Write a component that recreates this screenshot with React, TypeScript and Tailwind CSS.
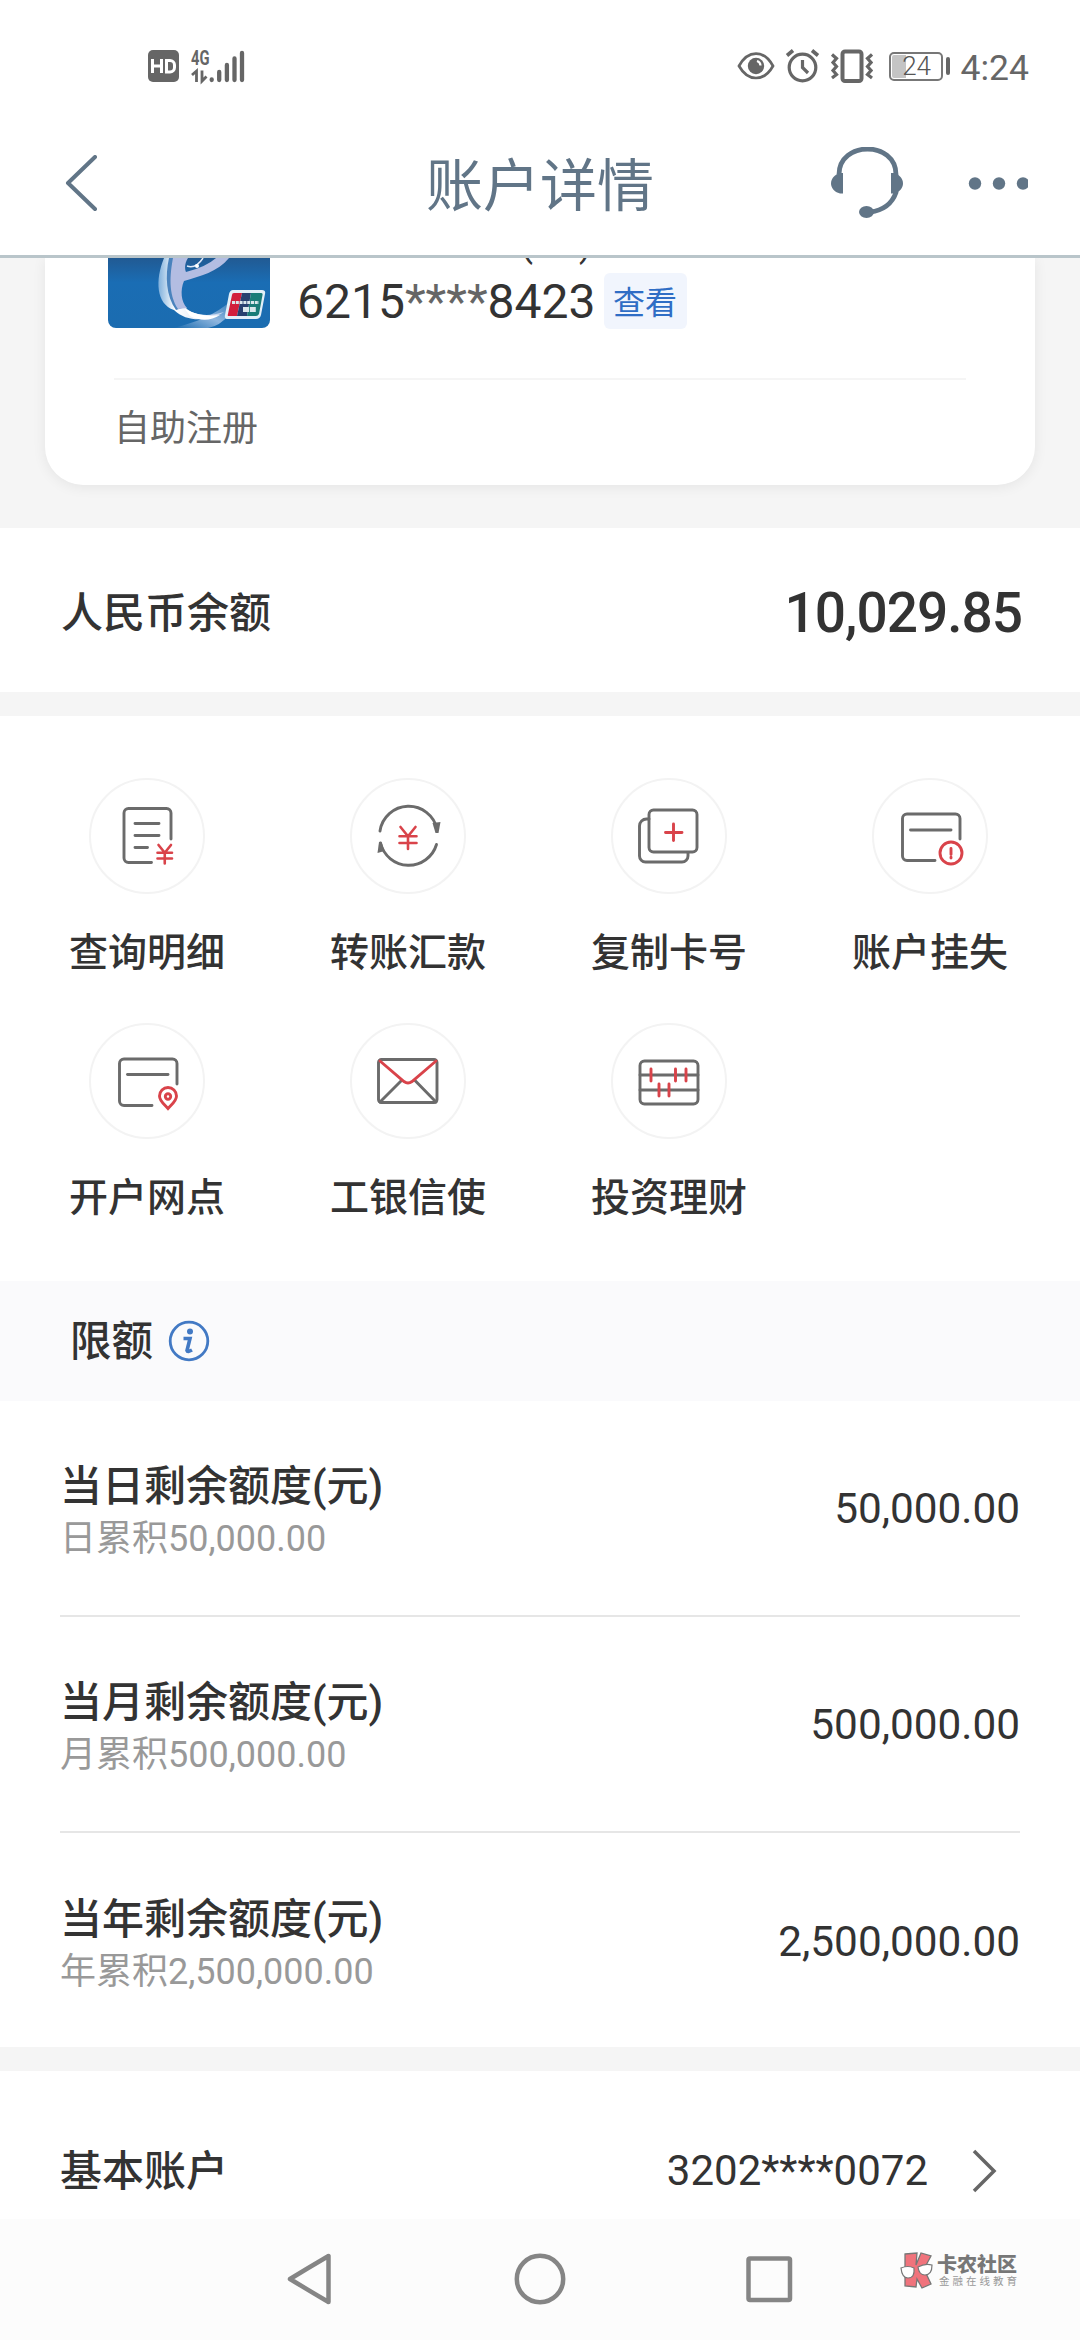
import type { ReactNode } from 'react'

const RED = '#d9434a'
const LINE = '#6b6b6b'
const SLATE = '#617587'

function Yuan({ x, y, w, h }: { x: number; y: number; w: number; h: number }) {
  const cx = x + w / 2
  return (
    <path
      d={`M${x + 1} ${y}L${cx} ${y + h * 0.42}L${x + w - 1} ${y}M${cx} ${y + h * 0.42}V${y + h}M${x} ${y + h * 0.42}H${x + w}M${x} ${y + h * 0.73}H${x + w}`}
      stroke={RED}
      strokeWidth="2.6"
    />
  )
}

// All action icons share a 116x116 box with the ring drawn around them
const ACTIONS: { label: string; icon: ReactNode }[] = [
  {
    label: '查询明细',
    icon: (
      <>
        <path d="M82 61V35a4.500 4.500 0 0 0-4.500-4.500H39.500A4.500 4.500 0 0 0 35 35V80a4.500 4.500 0 0 0 4.500 4.500H62.500" />
        <path d="M46 45.500H70M46 57.500H70M46 69.500H58.500" />
        <Yuan x={68.500} y={67} w={14.500} h={18.500} />
      </>
    ),
  },
  {
    label: '转账汇款',
    icon: (
      <>
        <path d="M30 53A29 29 0 0 1 87 51" />
        <path d="M86.500 66.500A29 29 0 0 1 30.500 65" />
        <path d="M82.500 45L90.500 44L88.500 55H85.500Z" fill={LINE} stroke="none" />
        <path d="M29 64H31.500L34.500 73L27.500 75Z" fill={LINE} stroke="none" />
        <Yuan x={49.500} y={49} w={17} h={22} />
      </>
    ),
  },
  {
    label: '复制卡号',
    icon: (
      <>
        <rect x="38" y="32" width="48" height="42" rx="4.500" />
        <path d="M38 41H35.500A7 7 0 0 0 28.500 48V78a6 6 0 0 0 6 6H71a6 6 0 0 0 6-6V75" />
        <path d="M62.500 46V62.500M54.500 54.500H71" stroke={RED} />
      </>
    ),
  },
  {
    label: '账户挂失',
    icon: (
      <>
        <path d="M88 61V40.500a4.500 4.500 0 0 0-4.500-4.500H35a4.500 4.500 0 0 0-4.500 4.500V78A4.500 4.500 0 0 0 35 82.500H63" />
        <path d="M38.500 52H79" />
        <circle cx="79" cy="75" r="11" stroke={RED} />
        <path d="M79 70.500V76.500M79 79.200V80" stroke={RED} />
      </>
    ),
  },
  {
    label: '开户网点',
    icon: (
      <>
        <path d="M88 61V40.500a4.500 4.500 0 0 0-4.500-4.500H35a4.500 4.500 0 0 0-4.500 4.500V78A4.500 4.500 0 0 0 35 82.500H63" />
        <path d="M38.500 51.500H79" />
        <path d="M79 85.500C75 81 70.500 78 70.500 73a8.500 8.500 0 0 1 17 0C87.500 78 83 81 79 85.500Z" stroke={RED} />
        <circle cx="79" cy="73.500" r="2.700" stroke={RED} />
      </>
    ),
  },
  {
    label: '工银信使',
    icon: (
      <>
        <rect x="28.500" y="36.500" width="58.500" height="43" rx="3" />
        <path d="M30 79L51.500 57.500M86 79L65 57.500" />
        <path d="M30 38L54 58.500Q58 61.500 62 58.500L86 38" stroke={RED} />
      </>
    ),
  },
  {
    label: '投资理财',
    icon: (
      <>
        <rect x="29" y="38" width="58" height="43" rx="4.500" />
        <path d="M29 52H87M29 67H87" />
        <path d="M40 46V58M64.500 46V58M75 46V58M48 61V73M58 61V73" stroke={RED} />
      </>
    ),
  },
]

const LIMITS = [
  { title: '当日剩余额度(元)', note: '日累积50,000.00', value: '50,000.00' },
  { title: '当月剩余额度(元)', note: '月累积500,000.00', value: '500,000.00' },
  { title: '当年剩余额度(元)', note: '年累积2,500,000.00', value: '2,500,000.00' },
]

function StatusBar() {
  return (
    <div className="flex h-[132px] items-center justify-between pr-[51px] pl-[148px]">
      <div className="flex items-center gap-3">
        <svg className="h-[32px] w-[31px]" viewBox="0 0 31 32">
          <rect width="31" height="32" rx="5" fill="#666" />
          <path d="M4.500 9V23M13.500 9V23M4.500 16H13.500" stroke="#fff" strokeWidth="3" fill="none" />
          <path d="M18.500 10.500H22a4.500 4.500 0 0 1 4.500 4.500V17.500A4.500 4.500 0 0 1 22 22H18.500Z" stroke="#fff" strokeWidth="3" fill="none" />
        </svg>
        <svg className="h-[36px] w-[54px] overflow-visible" viewBox="0 0 54 36">
          <text x="0" y="17" fontSize="20" fontWeight="700" fill="#666" fontFamily="Roboto" textLength="18.500" lengthAdjust="spacingAndGlyphs">4G</text>
          <path d="M1 27L5.500 23V34M11 22.500V33L15.500 28.500" stroke="#666" strokeWidth="2.800" fill="none" />
          <path d="M20.700 32V31.500M28.200 32V24M35.900 32V17M43.500 32V10.500M51 32V5" stroke="#666" strokeWidth="4.300" strokeLinecap="round" />
        </svg>
      </div>
      <div className="flex items-center">
        <svg className="h-[34px] w-[136px]" viewBox="737 49.500 136 34">
          <path d="M739 66.500C748 50 764 50 773 66.500C764 82.500 748 82.500 739 66.500Z" fill="none" stroke="#666" strokeWidth="2.700" />
          <circle cx="756" cy="66.500" r="8.200" fill="#666" />
          <path d="M757 61.500A5 5 0 0 1 760.500 66" fill="none" stroke="#fff" strokeWidth="2.200" />
          <circle cx="802.500" cy="68" r="13.300" fill="none" stroke="#666" strokeWidth="3.200" />
          <path d="M802.500 60.500V68L808 73.500" fill="none" stroke="#666" strokeWidth="3.200" />
          <path d="M787 56L793 51M818 56L812 51" stroke="#666" strokeWidth="3.600" />
          <rect x="842.500" y="52" width="19" height="29.500" rx="2.500" fill="none" stroke="#666" strokeWidth="4" />
          <path d="M832 55L836.500 59L833 63L836.500 67L833 71L836.500 75L832 78.500M872 55L867.500 59L871 63L867.500 67L871 71L867.500 75L872 78.500" fill="none" stroke="#666" strokeWidth="3.200" />
        </svg>
        <div className="ml-[16px] flex h-[29px] w-[54px] items-center rounded-[5px] border-2 border-[#777] bg-[linear-gradient(90deg,#c4c4c4_15px,transparent_15px)] bg-clip-content p-px">
          <span className="w-full pl-[2px] text-center text-[26px] leading-[29px] font-light text-[#555]">24</span>
        </div>
        <div className="ml-[3px] h-[18px] w-[4px] rounded-sm bg-[#666]" />
        <span className="mt-[3px] ml-[11px] text-[35.500px] leading-[40px] text-[#666]">4:24</span>
      </div>
    </div>
  )
}

function TitleBar() {
  return (
    <div className="flex h-[126px] items-center justify-between border-b-3 border-[#b9c5ca] pr-[52px] pb-[20px] pl-[64px]">
      <svg className="h-[58px] w-[188px]" viewBox="0 0 188 58" fill="none" stroke={SLATE} strokeWidth="4" strokeLinecap="round" strokeLinejoin="round">
        <path d="M31 2L4 28L31 54" />
      </svg>
      <h1 className="mt-[6px] text-[57px] leading-[60px] text-[#617587]">账户详情</h1>
      <svg className="h-[74px] w-[200px]" viewBox="828 146.500 200 74" fill={SLATE}>
        <path d="M839 174C839 140 896 140 896 174V192Q890 209 870 211.500" fill="none" stroke={SLATE} strokeWidth="4.800" />
        <path d="M843 172.500V193H840C828 190 828 176 840 172.500Z" />
        <path d="M891 172.500V193H894C906 190 906 176 894 172.500Z" />
        <ellipse cx="866.500" cy="211.500" rx="7.500" ry="6" />
        <circle cx="975" cy="183" r="6.200" />
        <circle cx="999" cy="183" r="6.200" />
        <circle cx="1023" cy="183" r="6.200" />
      </svg>
    </div>
  )
}

function CardThumb() {
  return (
    <svg className="h-[70px] w-[162px] shrink-0 rounded-b-[8px]" viewBox="0 0 162 70">
      <defs>
        <linearGradient id="sea" x1="0" y1="0" x2="0" y2="1">
          <stop offset="0" stopColor="#215a93" />
          <stop offset=".35" stopColor="#1a6db4" />
          <stop offset="1" stopColor="#1b6cb0" />
        </linearGradient>
        <linearGradient id="silver" x1="0" y1="0" x2="1" y2="0">
          <stop offset="0" stopColor="#7fb0dc" />
          <stop offset=".25" stopColor="#ffffff" />
          <stop offset="1" stopColor="#c3d3ee" />
        </linearGradient>
        <linearGradient id="glow" x1="0" y1="1" x2="1" y2="0">
          <stop offset="0" stopColor="#1b6cb0" />
          <stop offset=".5" stopColor="#8fb6de" />
          <stop offset="1" stopColor="#2f78b8" />
        </linearGradient>
      </defs>
      <rect width="162" height="70" fill="url(#sea)" />
      <path d="M66 70C88 64 106 58 124 42L122 56Q112 68 100 70Z" fill="url(#glow)" />
      <path d="M56 0C47 22 48 46 66 52C80 66 104 62 116 54C98 60 84 56 78 50L66 44L62 0Z" fill="url(#silver)" />
      <path d="M61 0H66C61 18 64 38 74 50L68 52C58 38 57 18 61 0Z" fill="#4a83bd" />
      <path d="M65 0H80C76 6 77 12 78 14Q98 9 108 0H121C110 14 92 18 76 23C72 32 73 44 79 50L70 51C60 36 62 16 65 0Z" fill="#b3bde2" />
      <path d="M79 8Q88 11 95 0" fill="none" stroke="#dfe8f8" strokeWidth="1.500" />
      <circle cx="89" cy="8" r="2" fill="#fff" />
      <path d="M77 51Q94 60 112 57Q98 66 82 58Z" fill="#fff" />
      <g transform="translate(118 32)">
        <path d="M7 0H36Q40 0 39 4L35 25Q34 29 30 29H2Q-2 29-1 25L3 4Q4 0 7 0Z" fill="#e3eff8" />
        <path d="M8 3H16L11 26H3Q1 26 2 24L6 5Q6 3 8 3Z" fill="#d21f3c" />
        <path d="M16 3H25L21 26H11Z" fill="#27406f" />
        <path d="M25 3H35Q37 3 36.500 5L33 24Q32 26 30 26H21Z" fill="#1a7c78" />
        <path d="M6 12.500H33" stroke="#d9e7ec" strokeWidth="3" strokeDasharray="3 .8" />
        <path d="M17 19.500H30" stroke="#d9e7ec" strokeWidth="5" strokeDasharray="6 .8" />
      </g>
    </svg>
  )
}

function CardPanel() {
  return (
    <section className="h-[270px] overflow-hidden bg-[#f5f5f5] px-[45px]">
      <div className="h-[227px] rounded-b-[38px] bg-white px-[63px] shadow-[0_2px_14px_rgba(0,0,0,0.07)]">
        <div className="flex h-[120px]">
          <CardThumb />
          <div className="ml-[27px]">
            {/* Card name, scrolled under the title bar */}
            <div className="flex h-[14px] items-start overflow-hidden pl-[223px] text-[38px] text-[#333]">
              <span className="-mt-[35px] leading-[40px]">(</span>
              <span className="-mt-[35px] ml-[46px] leading-[40px]">)</span>
            </div>
            <div className="flex items-center">
              <span className="pt-[2px] text-[48px] leading-[56px] text-[#333]">
                6215<span className="text-[#666]">****</span>8423
              </span>
              <span className="ml-[8px] h-[56px] rounded-[6px] bg-[#f1f5fd] px-[9.500px] text-[32px] leading-[60px] text-[#2f6dc5]">查看</span>
            </div>
          </div>
        </div>
        <div className="mx-[6px] border-t-2 border-[#f5f5f5] pt-[28px] text-[36px] leading-[42px] text-[#666]">自助注册</div>
      </div>
    </section>
  )
}

function NavBar() {
  return (
    <nav className="flex h-[121px] items-center bg-[#fcfcfc] pl-[286px]">
      <svg className="mb-[2px] h-[54px] w-[508px]" viewBox="286 2252 508 54" fill="none" stroke="#858585" strokeWidth="4.500" strokeLinejoin="round">
        <path d="M328.500 2256V2302Q308 2290 290 2279Q308 2268 328.500 2256Z" />
        <circle cx="540" cy="2279" r="23.200" />
        <rect x="748.500" y="2258.500" width="41.500" height="41.500" rx="1.500" />
      </svg>
      <svg className="mb-[17px] ml-[105px] h-[38px] w-[36px]" viewBox="0 0 36 38">
        <path d="M6 2L18 1L17 13L22 1L32 4L25 17L32 32L23 36L18 27L17 35L6 34Z" fill="#f0737c" stroke="#777" strokeWidth="1.300" />
        <path d="M2 16Q9 13 15 16Q16 26 9 26Q3 26 2 16Z" fill="#fff" stroke="#777" strokeWidth="1.200" />
        <path d="M19 15Q26 11 33 13Q33 23 26 23Q20 23 19 15Z" fill="#fff" stroke="#777" strokeWidth="1.200" />
      </svg>
      <div className="mb-[18px] ml-[2px] flex flex-col whitespace-nowrap">
        <span className="text-[20px] leading-[22px] font-black text-[#777]">卡农社区</span>
        <span className="ml-[2px] text-[10.500px] leading-[12px] tracking-[3px] text-[#999]">金融在线教育</span>
      </div>
    </nav>
  )
}

export default function App() {
  return (
    <div className="h-[2340px] w-[1080px] overflow-hidden bg-white font-[Roboto,'Noto_Sans_CJK_SC',sans-serif] text-[#333]">
      <StatusBar />
      <TitleBar />
      <CardPanel />

      {/* Balance */}
      <section className="flex h-[164px] items-center justify-between pt-[7px] pr-[58px] pl-[61px]">
        <span className="text-[42px] font-medium">人民币余额</span>
        <span className="text-[55px] font-medium tracking-[-1px]">10,029.85</span>
      </section>
      <div className="h-[24px] bg-[#f5f5f5]" />

      {/* Actions */}
      <section className="grid h-[565px] grid-cols-4 content-start pt-[62px] pr-[19.500px] pl-[16.500px]">
        {ACTIONS.map(a => (
          <div key={a.label} className="flex h-[245px] flex-col items-center">
            <svg className="h-[116px] w-[116px]" viewBox="0 0 116 116" fill="none" stroke={LINE} strokeWidth="2.900" strokeLinecap="round">
              <circle cx="58" cy="58" r="57" stroke="#f3f3f3" strokeWidth="2" />
              {a.icon}
            </svg>
            <span className="mt-[36px] text-[39px] leading-[46px] font-medium">{a.label}</span>
          </div>
        ))}
      </section>

      {/* Limits */}
      <div className="flex h-[120px] items-center gap-[15px] bg-[#fafafc] pl-[70px]">
        <span className="pt-[3px] text-[41.500px] font-medium">限额</span>
        <svg className="h-[42px] w-[42px]" viewBox="0 0 42 42" fill="none" stroke="#4279c4">
          <circle cx="21" cy="21" r="18.800" strokeWidth="2.800" />
          <circle cx="22" cy="11.500" r="3" fill="#4279c4" stroke="none" />
          <path d="M15.500 18.500H22L19 30.500Q19.500 32.500 24 30" strokeWidth="3.600" />
        </svg>
      </div>
      <section className="h-[646px] divide-y-2 divide-[#e6e6e6] px-[60px]">
        {LIMITS.map(l => (
          <div key={l.title} className="flex h-[216px] items-center justify-between">
            <div className="flex flex-col pt-[7px]">
              <span className="text-[42px] leading-[54px] font-medium">{l.title}</span>
              <span className="text-[36px] leading-[50px] text-[#999]">{l.note}</span>
            </div>
            <span className="pt-[2px] text-[42.300px]">{l.value}</span>
          </div>
        ))}
      </section>
      <div className="h-[24px] bg-[#f5f5f5]" />

      {/* Base account */}
      <section className="flex h-[148px] items-center pt-[51px] pr-[81px] pl-[60px]">
        <span className="flex-1 pt-[2px] text-[42px] font-medium">基本账户</span>
        <span className="text-[42px]">3202****0072</span>
        <svg className="ml-[43px] h-[44px] w-[28px]" viewBox="0 0 28 44" fill="none" stroke="#666" strokeWidth="3.500">
          <path d="M3 2L23 22L3 42" />
        </svg>
      </section>

      <NavBar />
    </div>
  )
}
